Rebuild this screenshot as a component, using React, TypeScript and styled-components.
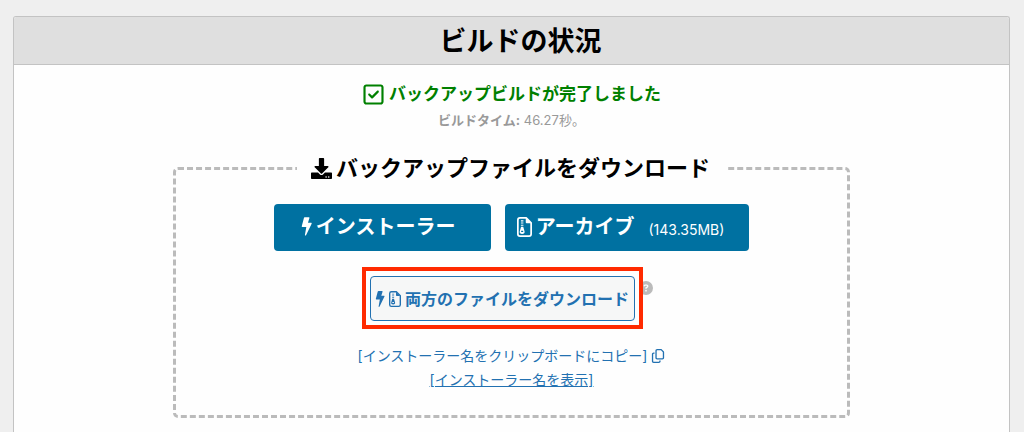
import React from "react";
import styled, { createGlobalStyle } from "styled-components";
import { FaDownload } from "react-icons/fa";
import { FaCircleQuestion, FaRegCopy, FaRegSquareCheck } from "react-icons/fa6";

const GlobalStyle = createGlobalStyle`
  *, *::before, *::after { box-sizing: border-box; }
  body {
    margin: 0;
    background: #efefef;
    color: #000;
    font-family: Inter, "Noto Sans CJK JP", sans-serif;
    font-size: 14px;
    line-height: 24px;
  }
  svg { flex: none; display: block; }
`;

const Page = styled.main`
  padding: 16px 14px 0 13px;
  min-height: 100vh;
  display: flex;
`;

const Panel = styled.section`
  flex: 1;
  border: 1px solid #c3c3c3;
  border-bottom: 0;
  border-radius: 3px 3px 0 0;
  background: #fefefe;
`;

const PanelTitle = styled.h1`
  margin: 0;
  padding: 5px 0 2px 18px;
  background: #dfdfdf;
  border-bottom: 1px solid #c3c3c3;
  border-radius: 2px 2px 0 0;
  font-size: 27px;
  line-height: 40px;
  font-weight: 700;
  text-align: center;
`;

const Status = styled.p`
  margin: 15px 0 0;
  display: flex;
  align-items: center;
  justify-content: center;
  gap: 4px;
  color: #008000;
  font-size: 17px;
  line-height: 28px;
  font-weight: 700;
`;

const BuildTime = styled.p`
  margin: 0;
  color: #999;
  font-size: 13px;
  text-align: center;
`;

const Downloads = styled.fieldset`
  margin: 21px auto 0;
  padding: 21px 16px 23px;
  width: 68%;
  min-width: 0;
  border: 3px dashed #bbb;
  border-radius: 5px;
  display: flex;
  flex-direction: column;
  align-items: center;
`;

const DownloadsTitle = styled.legend`
  margin: 0 auto;
  padding: 0 16px 0 14px;
  display: flex;
  align-items: center;
  gap: 4px;
  font-size: 22px;
  line-height: 30px;
  font-weight: 700;
`;

const ButtonRow = styled.div`
  display: flex;
  gap: 14px;
`;

const PrimaryButton = styled.button`
  min-width: 217px;
  height: 47px;
  padding: 0 20px 2px 12px;
  display: flex;
  align-items: center;
  justify-content: center;
  gap: 4px;
  border: 0;
  border-radius: 4px;
  background: #0071a1;
  color: #fff;
  font: inherit;
  font-size: 20px;
  font-weight: 700;
`;

const FileSize = styled.span`
  padding: 6px 5px 0 10px;
  font-size: 14px;
  font-weight: 400;
`;

const BothRow = styled.div`
  margin-top: 16px;
  padding-right: 18px;
  position: relative;
`;

const Highlight = styled.div`
  padding: 5px 4px 4px;
  border: 4px solid #ff2a00;
  background: #fefefe;
  position: relative;
  z-index: 1;
`;

const SecondaryButton = styled.button`
  height: 45px;
  padding: 0 5px 0 4px;
  display: flex;
  align-items: center;
  gap: 4px;
  border: 1px solid #2271b1;
  border-radius: 4px;
  background: #f6f7f7;
  color: #2271b1;
  font: inherit;
  font-size: 16px;
  font-weight: 700;
`;

const Help = styled.button`
  position: absolute;
  top: 14px;
  right: 8px;
  padding: 0;
  border: 0;
  background: none;
  color: #bbb;
`;

const Links = styled.div`
  margin-top: 15px;
  display: flex;
  flex-direction: column;
  align-items: center;
`;

const TextLink = styled.a<{ $underlined?: boolean }>`
  display: flex;
  align-items: center;
  gap: 4px;
  color: #2271b1;
  text-decoration: ${(p) => (p.$underlined ? "underline" : "none")};
`;

function BoltIcon({ height }: { height: number }) {
  return (
    <svg width={Math.round(height * 0.6)} height={height} viewBox="0 0 12 20" fill="currentColor" aria-hidden>
      <path d="M3.2 0.6Q3.3 0 4 0H8.6Q9.4 0 9.2 0.8L7.6 6H11.1Q12 6 11.6 6.9L5.5 19.5Q5.2 20 4.7 19.9Q4.1 19.7 4.3 19L5.8 10.6H1.4Q0.7 10.6 0.8 9.8Z" />
    </svg>
  );
}

function ZipIcon({ height }: { height: number }) {
  return (
    <svg width={Math.round(height * 0.75)} height={height} viewBox="0 0 384 512" aria-hidden>
      <path
        d="M76 22H236L362 148V436A54 54 0 0 1 308 490H76A54 54 0 0 1 22 436V76A54 54 0 0 1 76 22Z"
        fill="none"
        stroke="currentColor"
        strokeWidth="44"
        strokeLinejoin="round"
      />
      <path
        d="M224 24V136Q224 160 248 160H360ZM100 84h64v28h-64zM100 140h64v28h-64zM100 196h64v28h-64z"
        fill="currentColor"
      />
      <path
        fillRule="evenodd"
        d="M104 250H160L194 370C204 408 176 432 132 432S60 408 70 370ZM106 354V384H158V354Z"
        fill="currentColor"
      />
    </svg>
  );
}

export default function App() {
  return (
    <>
      <GlobalStyle />
      <Page lang="ja">
        <Panel>
          <PanelTitle>ビルドの状況</PanelTitle>
          <Status>
            <FaRegSquareCheck size={23} aria-hidden />
            バックアップビルドが完了しました
          </Status>
          <BuildTime>
            <b>ビルドタイム:</b> 46.27秒。
          </BuildTime>
          <Downloads>
            <DownloadsTitle>
              <FaDownload size={21} aria-hidden />
              バックアップファイルをダウンロード
            </DownloadsTitle>
            <ButtonRow>
              <PrimaryButton type="button">
                <BoltIcon height={19} />
                インストーラー
              </PrimaryButton>
              <PrimaryButton type="button">
                <ZipIcon height={20} />
                アーカイブ
                <FileSize>(143.35MB)</FileSize>
              </PrimaryButton>
            </ButtonRow>
            <BothRow>
              <Highlight>
                <SecondaryButton type="button">
                  <BoltIcon height={16} />
                  <ZipIcon height={16} />
                  両方のファイルをダウンロード
                </SecondaryButton>
              </Highlight>
              <Help type="button" aria-label="ヘルプ">
                <FaCircleQuestion size={14} aria-hidden />
              </Help>
            </BothRow>
            <Links>
              <TextLink href="#copy">
                [インストーラー名をクリップボードにコピー]
                <FaRegCopy size={14} aria-hidden />
              </TextLink>
              <TextLink href="#show" $underlined>
                [インストーラー名を表示]
              </TextLink>
            </Links>
          </Downloads>
        </Panel>
      </Page>
    </>
  );
}
